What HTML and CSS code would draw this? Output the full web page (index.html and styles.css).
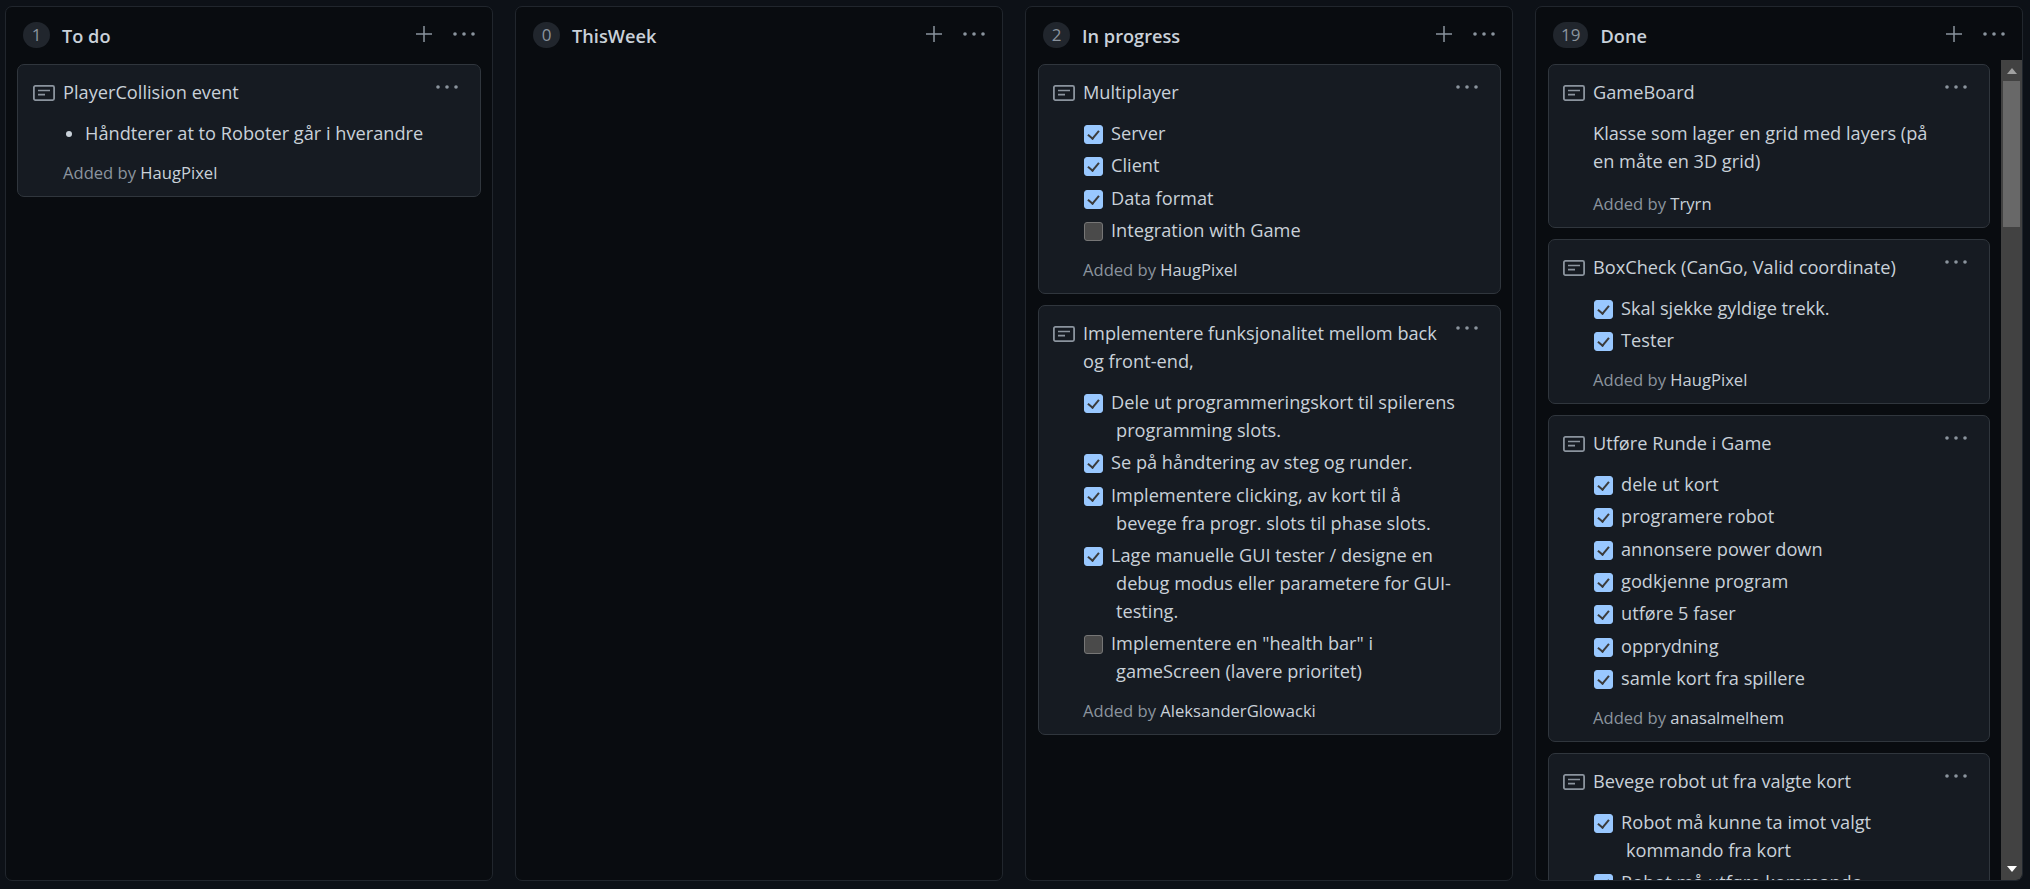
FILE: index.html
```html
<!DOCTYPE html>
<html lang="en">
<head>
  <meta charset="UTF-8" />
  <title>Project board</title>
  <link rel="stylesheet" href="styles.css">
</head>
<body>

  <svg class="sprites" width="0" height="0">
    <symbol id="i-note" viewBox="0 0 22 16">
      <rect x="0.9" y="0.9" width="20.2" height="14.2" rx="1.5" fill="none" stroke="currentColor" stroke-width="1.8"/>
      <path d="M5 5.5h12M5 9.7h7" fill="none" stroke="currentColor" stroke-width="1.7"/>
    </symbol>
    <symbol id="i-plus" viewBox="0 0 16 16">
      <path d="M8 0v16M0 8h16" fill="none" stroke="currentColor" stroke-width="1.5"/>
    </symbol>
    <symbol id="i-dots" viewBox="0 0 22 4">
      <circle cx="2" cy="2" r="1.8" fill="currentColor"/>
      <circle cx="11" cy="2" r="1.8" fill="currentColor"/>
      <circle cx="20" cy="2" r="1.8" fill="currentColor"/>
    </symbol>
  </svg>

  <div class="board">

    <section class="column">
      <header class="column-head">
        <span class="counter">1</span>
        <h2>To do</h2>
        <svg class="plus"><use href="#i-plus"/></svg>
        <svg class="dots"><use href="#i-dots"/></svg>
      </header>
      <div class="column-body">
        <div class="cards">
          <article class="card">
            <div class="card-title">
              <svg class="note"><use href="#i-note"/></svg>
              <h3>PlayerCollision event</h3>
              <svg class="dots"><use href="#i-dots"/></svg>
            </div>
            <ul class="bullets">
              <li>Håndterer at to Roboter går i hverandre</li>
            </ul>
            <p class="added">Added by <b>HaugPixel</b></p>
          </article>
        </div>
      </div>
    </section>

    <section class="column">
      <header class="column-head">
        <span class="counter">0</span>
        <h2>ThisWeek</h2>
        <svg class="plus"><use href="#i-plus"/></svg>
        <svg class="dots"><use href="#i-dots"/></svg>
      </header>
      <div class="column-body">
        <div class="cards"></div>
      </div>
    </section>

    <section class="column">
      <header class="column-head">
        <span class="counter">2</span>
        <h2>In progress</h2>
        <svg class="plus"><use href="#i-plus"/></svg>
        <svg class="dots"><use href="#i-dots"/></svg>
      </header>
      <div class="column-body">
        <div class="cards">
          <article class="card">
            <div class="card-title">
              <svg class="note"><use href="#i-note"/></svg>
              <h3>Multiplayer</h3>
              <svg class="dots"><use href="#i-dots"/></svg>
            </div>
            <ul class="tasks">
              <li class="checked">Server</li>
              <li class="checked">Client</li>
              <li class="checked">Data format</li>
              <li>Integration with Game</li>
            </ul>
            <p class="added">Added by <b>HaugPixel</b></p>
          </article>
          <article class="card">
            <div class="card-title">
              <svg class="note"><use href="#i-note"/></svg>
              <h3>Implementere funksjonalitet mellom back<br>og front-end,</h3>
              <svg class="dots"><use href="#i-dots"/></svg>
            </div>
            <ul class="tasks">
              <li class="checked">Dele ut programmeringskort til spilerens<br><span class="cont">programming slots.</span></li>
              <li class="checked">Se på håndtering av steg og runder.</li>
              <li class="checked">Implementere clicking, av kort til å<br><span class="cont">bevege fra progr. slots til phase slots.</span></li>
              <li class="checked">Lage manuelle GUI tester / designe en<br><span class="cont">debug modus eller parametere for GUI-</span><br><span class="cont">testing.</span></li>
              <li>Implementere en "health bar" i<br><span class="cont">gameScreen (lavere prioritet)</span></li>
            </ul>
            <p class="added">Added by <b>AleksanderGlowacki</b></p>
          </article>
        </div>
      </div>
    </section>

    <section class="column">
      <header class="column-head">
        <span class="counter">19</span>
        <h2>Done</h2>
        <svg class="plus"><use href="#i-plus"/></svg>
        <svg class="dots"><use href="#i-dots"/></svg>
      </header>
      <div class="column-body">
        <div class="cards">
          <article class="card">
            <div class="card-title">
              <svg class="note"><use href="#i-note"/></svg>
              <h3>GameBoard</h3>
              <svg class="dots"><use href="#i-dots"/></svg>
            </div>
            <p class="text">Klasse som lager en grid med layers (på<br>en måte en 3D grid)</p>
            <p class="added">Added by <b>Tryrn</b></p>
          </article>
          <article class="card">
            <div class="card-title">
              <svg class="note"><use href="#i-note"/></svg>
              <h3>BoxCheck (CanGo, Valid coordinate)</h3>
              <svg class="dots"><use href="#i-dots"/></svg>
            </div>
            <ul class="tasks">
              <li class="checked">Skal sjekke gyldige trekk.</li>
              <li class="checked">Tester</li>
            </ul>
            <p class="added">Added by <b>HaugPixel</b></p>
          </article>
          <article class="card">
            <div class="card-title">
              <svg class="note"><use href="#i-note"/></svg>
              <h3>Utføre Runde i Game</h3>
              <svg class="dots"><use href="#i-dots"/></svg>
            </div>
            <ul class="tasks">
              <li class="checked">dele ut kort</li>
              <li class="checked">programere robot</li>
              <li class="checked">annonsere power down</li>
              <li class="checked">godkjenne program</li>
              <li class="checked">utføre 5 faser</li>
              <li class="checked">opprydning</li>
              <li class="checked">samle kort fra spillere</li>
            </ul>
            <p class="added">Added by <b>anasalmelhem</b></p>
          </article>
          <article class="card">
            <div class="card-title">
              <svg class="note"><use href="#i-note"/></svg>
              <h3>Bevege robot ut fra valgte kort</h3>
              <svg class="dots"><use href="#i-dots"/></svg>
            </div>
            <ul class="tasks">
              <li class="checked">Robot må kunne ta imot valgt<br><span class="cont">kommando fra kort</span></li>
              <li class="checked">Robot må utføre kommando</li>
            </ul>
          </article>
        </div>
        <div class="scrollbar">
          <span class="arrow-up"></span>
          <span class="thumb"></span>
          <span class="arrow-down"></span>
        </div>
      </div>
    </section>

  </div>

</body>
</html>
```

FILE: styles.css
```css
* {
  box-sizing: border-box;
}
html, body {
  height: 100%;
}
body {
  margin: 0;
  background: #0d1117;
  color: #c9d1d9;
  font-family: "Open Sans", "Noto Sans", Arial, sans-serif;
  font-size: 18.2px;
  overflow: hidden;
}
.sprites {
  position: absolute;
}
h2, h3, p, ul {
  margin: 0;
  padding: 0;
}
.board {
  display: flex;
  gap: 22px;
  height: 889px;
  padding: 6px 7px 8px 5px;
}
.column {
  flex: 1 1 0;
  min-width: 0;
  display: flex;
  flex-direction: column;
  background: #090c10;
  border: 1px solid #21262d;
  border-radius: 7px;
  overflow: hidden;
}
.column-head {
  display: flex;
  align-items: center;
  height: 53px;
  flex: none;
  padding: 0 17px 0 17px;
}
.counter {
  flex: none;
  min-width: 27px;
  height: 26px;
  padding: 0 8px;
  margin-top: 3px;
  margin-right: 12px;
  border-radius: 13px;
  background: #21262d;
  color: #8b949e;
  font-size: 17px;
  line-height: 26px;
  text-align: center;
}
.column-head h2 {
  flex: 1;
  margin-top: 5px;
  font-size: 18.2px;
  font-weight: 600;
  color: #c9d1d9;
}
.plus {
  width: 16px;
  height: 16px;
  color: #8b949e;
}
.column-head .dots {
  width: 22px;
  height: 4px;
  margin-left: 21px;
  color: #8b949e;
}
.column-body {
  flex: 1;
  min-height: 0;
  display: flex;
  overflow: hidden;
}
.cards {
  flex: 1;
  min-width: 0;
  padding: 4px 11px 0 12px;
  display: flex;
  flex-direction: column;
  gap: 10.7px;
}
.card {
  flex: none;
  background: #161b22;
  border: 1px solid #30363d;
  border-radius: 7px;
  padding: 13px 14px 0 14px;
}
.column:first-child .card {
  margin-left: -1px;
  padding-left: 15px;
}
.card-title {
  display: flex;
  align-items: flex-start;
}
.note {
  flex: none;
  width: 22px;
  height: 16px;
  margin-top: 7px;
  margin-right: 8px;
  color: #8b949e;
}
.card-title h3 {
  flex: 1;
  font-size: 18.2px;
  font-weight: 400;
  line-height: 28px;
  color: #c9d1d9;
}
.card-title .dots {
  flex: none;
  width: 22px;
  height: 4px;
  margin: 7px 8px 0 0;
  color: #8b949e;
}
.text {
  margin: 13px 0 0 30px;
  line-height: 28px;
}
.text + .added {
  margin-top: 17px;
}
.bullets {
  margin: 13px 0 0 30px;
  padding-left: 22px;
  line-height: 28px;
}
.tasks {
  margin: 13px 0 0 30px;
  list-style: none;
  line-height: 28px;
}
.tasks li {
  position: relative;
  padding-left: 28px;
  margin-bottom: 4.375px;
}
.tasks li:last-child {
  margin-bottom: 0;
}
.tasks .cont {
  margin-left: 5px;
}
/* checkbox box and tick */
.tasks li::before {
  content: "";
  position: absolute;
  left: 1px;
  top: 6px;
  width: 17px;
  height: 17px;
  border-radius: 3px;
  background: #4a4a4a;
  border: 1px solid #767676;
}
.tasks li.checked::before {
  background: #99c8ff;
  border-color: #99c8ff;
}
.tasks li.checked::after {
  content: "";
  position: absolute;
  left: 7px;
  top: 9px;
  width: 5px;
  height: 9px;
  border: solid #3b3b3b;
  border-width: 0 2px 2px 0;
  transform: rotate(40deg);
}
.added {
  margin: 14px 0 0 30px;
  padding-bottom: 11px;
  font-size: 16.6px;
  line-height: 24px;
  color: #8b949e;
}
.added b {
  font-weight: 400;
  color: #c9d1d9;
}
/* fake scrollbar for the Done column */
.scrollbar {
  flex: none;
  width: 21px;
  background: #424242;
  display: flex;
  flex-direction: column;
  align-items: center;
}
.thumb {
  width: 17px;
  height: 146px;
  margin-top: 7px;
  background: #686868;
}
.arrow-up, .arrow-down {
  flex: none;
  width: 0;
  height: 0;
  border-left: 5px solid transparent;
  border-right: 5px solid transparent;
}
.arrow-up {
  margin-top: 8px;
  border-bottom: 6px solid #a0a0a0;
}
.arrow-down {
  margin-top: auto;
  margin-bottom: 8px;
  border-top: 6px solid #ffffff;
}
```
